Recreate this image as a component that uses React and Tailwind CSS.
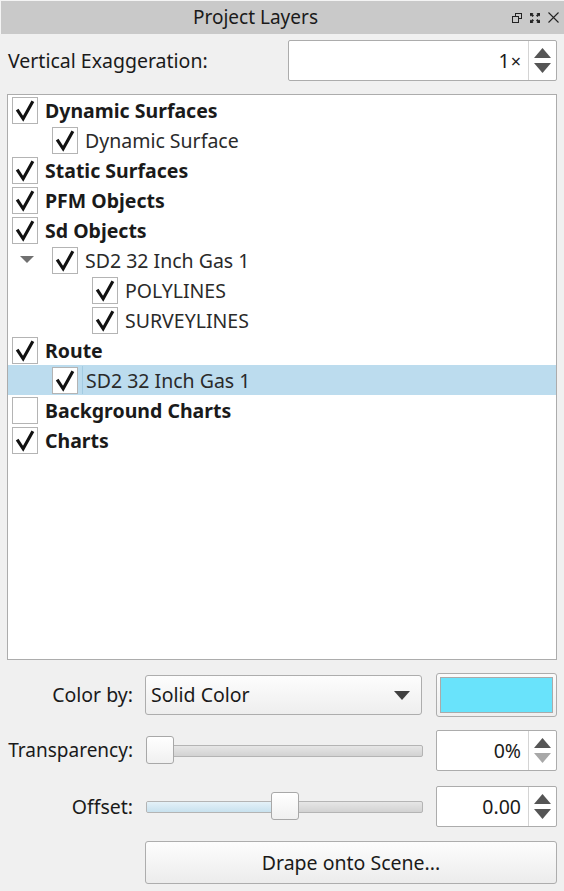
import React from 'react';

const FONT = { fontFamily: '"Noto Sans", "Open Sans", sans-serif' };

function Check({ checked = true }) {
  return (
    <div className="w-[26px] h-[27px] shrink-0 border border-[#b4b4b4] bg-white flex items-center justify-center">
      {checked && (
        <svg width="26" height="27" viewBox="0 0 26 27">
          <path d="M4.5 12.5 L11 22.5 L21.5 3.5" fill="none" stroke="#111" strokeWidth="3.4" strokeLinejoin="miter" />
        </svg>
      )}
    </div>
  );
}

function Row({ level = 0, bold, label, checked = true, arrow, selected }) {
  const indent = level === 0 ? 'w-0' : level === 1 ? 'w-[40px]' : 'w-[80px]';
  return (
    <div className={`h-[30px] flex items-center pl-[4px] ${selected ? 'bg-[#bcdcee]' : ''}`}>
      <div className={`${indent} h-full flex items-center shrink-0`}>
        {arrow && (
          <svg width="14" height="8" viewBox="0 0 14 8" className="ml-[8px]">
            <path d="M0 0 L14 0 L7 7 Z" fill="#707070" />
          </svg>
        )}
      </div>
      <Check checked={checked} />
      {selected ? (
        <div className="ml-[4px] h-[28px] flex-1 flex items-center pl-[3px] pt-[1px] border-l border-[#a3cbe1] text-[#2a2a2a] text-[19.5px]">
          {label}
        </div>
      ) : (
        <div className={`ml-[7px] pt-[1px] text-[19.5px] ${bold ? 'font-bold text-[#1a1a1a]' : 'text-[#2a2a2a]'}`}>{label}</div>
      )}
    </div>
  );
}

function Spin({ value, downDisabled, className }) {
  return (
    <div className={`bg-white border border-[#acacac] rounded-[2px] flex ${className}`}>
      <div className="flex-1 flex items-center justify-end pr-[7px] text-[19.5px] text-[#1a1a1a]">{value}</div>
      <div className="w-[28px] border-l border-[#d4d4d4] flex flex-col items-center justify-center gap-[5px]">
        <svg width="17" height="10" viewBox="0 0 17 10">
          <path d="M0 10 L8.5 0 L17 10 Z" fill="#555" />
        </svg>
        <svg width="17" height="10" viewBox="0 0 17 10">
          <path d="M0 0 L17 0 L8.5 10 Z" fill={downDisabled ? '#a8a8a8' : '#555'} />
        </svg>
      </div>
    </div>
  );
}

function Slider({ fill }) {
  return (
    <div className="relative w-[277px] h-[30px] flex items-center">
      <div className="w-full h-[12px] rounded-[2px] border border-[#b4b4b4] bg-gradient-to-b from-[#e6e6e6] to-[#d2d2d2] overflow-hidden flex">
        {fill && <div className="w-[126px] h-full bg-gradient-to-b from-[#e4f1f8] to-[#c8e1ee] border-r border-[#8fb3c6]" />}
      </div>
      <div
        className={`absolute top-0 h-[28px] w-[28px] rounded-[3px] border border-[#a8a8a8] bg-gradient-to-b from-white to-[#f0f0f0] ${
          fill ? 'left-[125px]' : 'left-0'
        }`}
      />
    </div>
  );
}

const layers = [
  { level: 0, bold: true, label: 'Dynamic Surfaces' },
  { level: 1, label: 'Dynamic Surface' },
  { level: 0, bold: true, label: 'Static Surfaces' },
  { level: 0, bold: true, label: 'PFM Objects' },
  { level: 0, bold: true, label: 'Sd Objects' },
  { level: 1, label: 'SD2 32 Inch Gas 1', arrow: true },
  { level: 2, label: 'POLYLINES' },
  { level: 2, label: 'SURVEYLINES' },
  { level: 0, bold: true, label: 'Route' },
  { level: 1, label: 'SD2 32 Inch Gas 1', selected: true },
  { level: 0, bold: true, label: 'Background Charts', checked: false },
  { level: 0, bold: true, label: 'Charts' },
];

export default function App() {
  return (
    <div className="w-[564px] h-[891px] bg-[#f0f0f0] flex flex-col overflow-hidden text-[#1a1a1a]" style={FONT}>
      {/* title bar */}
      <div className="h-[34px] shrink-0 bg-[#c9c9c9] border-t border-l border-[#f4f4f4] flex items-center">
        <div className="w-[509px] text-center text-[19px] text-[#1a1a1a]">Project Layers</div>
        <div className="flex items-center gap-[8px] pl-[2px]">
          <svg width="10" height="10" viewBox="0 0 10 10">
            <rect x="3.5" y="0.5" width="6" height="5" fill="none" stroke="#222" />
            <rect x="0.5" y="3.5" width="6" height="6" fill="#c9c9c9" stroke="#222" />
          </svg>
          <svg width="10" height="10" viewBox="0 0 10 10" fill="#222">
            <path d="M0 0 H3.5 L2.5 1 L4 2.5 L2.5 4 L1 2.5 L0 3.5 Z" />
            <path d="M10 0 V3.5 L9 2.5 L7.5 4 L6 2.5 L7.5 1 L6.5 0 Z" />
            <path d="M0 10 V6.5 L1 7.5 L2.5 6 L4 7.5 L2.5 9 L3.5 10 Z" />
            <path d="M10 10 H6.5 L7.5 9 L6 7.5 L7.5 6 L9 7.5 L10 6.5 Z" />
          </svg>
          <svg width="11" height="11" viewBox="0 0 11 11">
            <path d="M0.5 0.5 L10.5 10.5 M10.5 0.5 L0.5 10.5" stroke="#222" strokeWidth="1.1" />
          </svg>
        </div>
      </div>

      {/* vertical exaggeration */}
      <div className="h-[41px] mt-[6px] shrink-0 flex items-center pl-[8px] pr-[7px]">
        <div className="text-[19.5px]">Vertical Exaggeration:</div>
        <Spin
          className="ml-auto w-[269px] h-[41px]"
          value={
            <span>
              1<span className="text-[18px] ml-[1px]">×</span>
            </span>
          }
        />
      </div>

      {/* tree */}
      <div className="mt-[13px] mx-[7px] h-[566px] shrink-0 bg-white border border-[#acacac]">
        {layers.map((l, i) => (
          <Row key={i} {...l} />
        ))}
      </div>

      {/* color by */}
      <div className="mt-[13px] h-[44px] shrink-0 flex items-center pr-[7px]">
        <div className="w-[133px] text-right text-[19.5px]">Color by:</div>
        <div className="ml-[12px] w-[277px] h-[40px] rounded-[3px] border border-[#adadad] bg-gradient-to-b from-[#fdfdfd] to-[#eeeeee] flex items-center pl-[5px] pr-[11px]">
          <span className="text-[19.5px]">Solid Color</span>
          <svg width="16" height="9" viewBox="0 0 16 9" className="ml-auto">
            <path d="M0 0 L16 0 L8 9 Z" fill="#404040" />
          </svg>
        </div>
        <div className="ml-auto w-[121px] h-[44px] rounded-[3px] border border-[#adadad] bg-gradient-to-b from-[#fbfbfb] to-[#efefef] p-[3px]">
          <div className="w-full h-full bg-[#69e3fb] border border-[#aaaaaa]" />
        </div>
      </div>

      {/* transparency */}
      <div className="mt-[13px] h-[41px] shrink-0 flex items-center pr-[7px]">
        <div className="w-[133px] text-right text-[19px]">Transparency:</div>
        <div className="ml-[13px]">
          <Slider />
        </div>
        <Spin className="ml-auto w-[121px] h-[41px]" value="0%" downDisabled />
      </div>

      {/* offset */}
      <div className="mt-[15px] h-[41px] shrink-0 flex items-center pr-[7px]">
        <div className="w-[133px] text-right text-[19.5px]">Offset:</div>
        <div className="ml-[13px]">
          <Slider fill />
        </div>
        <Spin className="ml-auto w-[121px] h-[41px]" value="0.00" />
      </div>

      {/* drape */}
      <div className="mt-[14px] ml-[145px] mr-[7px] h-[43px] shrink-0 rounded-[3px] border border-[#adadad] bg-gradient-to-b from-[#fdfdfd] to-[#ececec] flex items-center justify-center text-[19.5px]">
        Drape onto Scene...
      </div>
    </div>
  );
}
